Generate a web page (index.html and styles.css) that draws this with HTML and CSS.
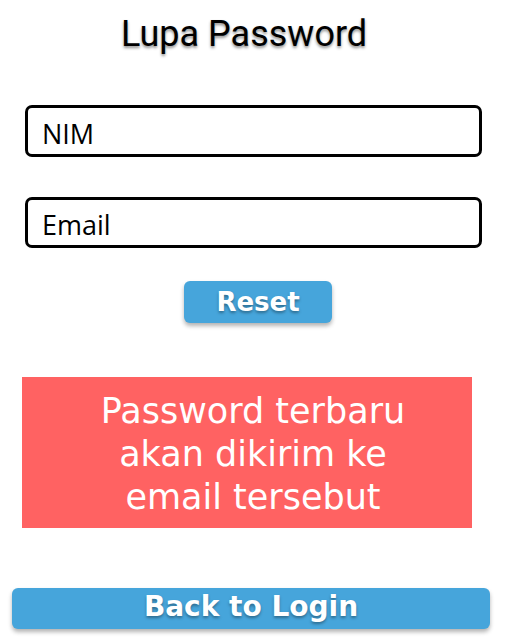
FILE: index.html
```html
<!DOCTYPE html>
<html>
<head>
<meta charset="utf-8">
<link rel="stylesheet" href="styles.css">
</head>
<body>
<div class="page">
  <h1 class="title">Lupa Password</h1>
  <div class="field">NIM</div>
  <div class="field field-second">Email</div>
  <div class="reset-row"><div class="btn btn-reset">Reset</div></div>
  <div class="notice">Password terbaru<br>akan dikirim ke<br>email tersebut</div>
  <div class="btn btn-back">Back to Login</div>
</div>
</body>
</html>
```
FILE: styles.css
```css
html, body {
  margin: 0;
  padding: 0;
  background: #ffffff;
}
.page {
  width: 506px;
  height: 644px;
  display: flex;
  flex-direction: column;
  overflow: hidden;
}
.title {
  margin: 14px 0 0 0;
  padding-right: 18px;
  text-align: center;
  font-family: Roboto, sans-serif;
  font-weight: 400;
  font-size: 36px;
  line-height: 40px;
  color: #000;
  text-shadow: 0 2px 3px rgba(0,0,0,0.45);
}
.field {
  box-sizing: border-box;
  margin: 51px 0 0 25px;
  width: 457px;
  height: 52px;
  border: 3px solid #000;
  border-radius: 7px;
  padding-left: 14px;
  display: flex;
  align-items: center;
  font-family: "Open Sans", sans-serif;
  font-size: 27px;
  color: #000;
  padding-top: 4px;
}
.field-second {
  margin-top: 40px;
  height: 51px;
}
.reset-row {
  display: flex;
  justify-content: flex-start;
  padding-left: 184px;
  margin-top: 33px;
}
.btn {
  box-sizing: border-box;
  background: #46a5db;
  color: #fff;
  font-family: "DejaVu Sans", sans-serif;
  font-weight: 700;
  text-align: center;
  text-shadow: 0 2px 3px rgba(0,0,0,0.35);
  box-shadow: 0 3px 4px rgba(0,0,0,0.3);
  border-radius: 6px;
}
.btn-reset {
  width: 148px;
  height: 42px;
  font-size: 26px;
  line-height: 42px;
}
.notice {
  margin: 54px 0 0 22px;
  width: 450px;
  height: 151px;
  box-sizing: border-box;
  background: #ff6262;
  color: #fff;
  font-family: "DejaVu Sans", sans-serif;
  font-weight: 400;
  font-size: 35px;
  line-height: 43px;
  text-align: center;
  padding: 13px 0 0 12px;
}
.btn-back {
  margin: 60px 0 0 12px;
  width: 478px;
  height: 41px;
  font-size: 28px;
  line-height: 37px;
}
```
